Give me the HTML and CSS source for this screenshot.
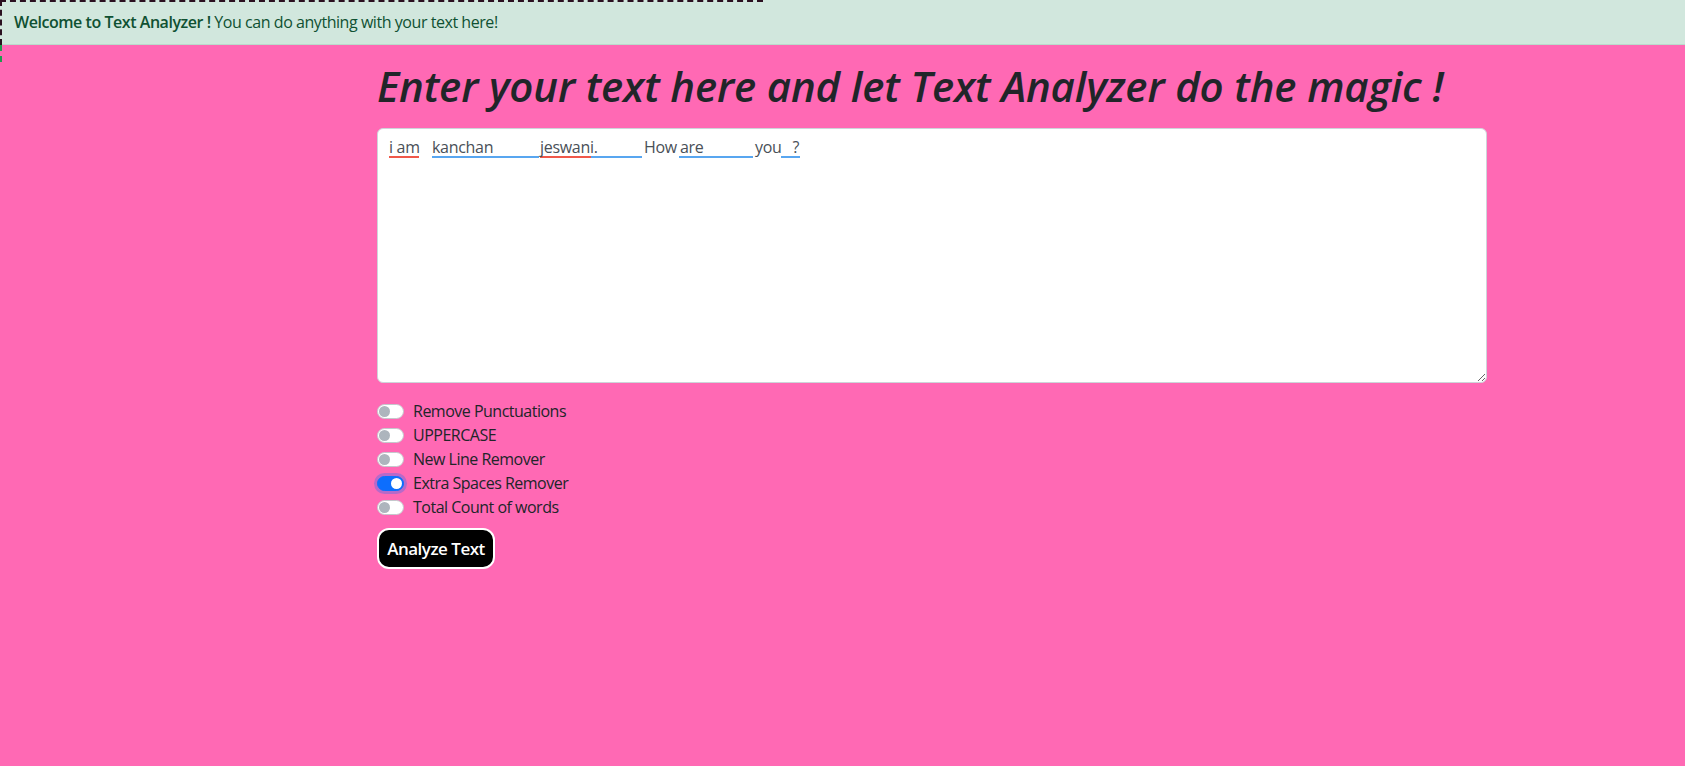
FILE: index.html
```html
<!DOCTYPE html>
<html lang="en">
<head>
<meta charset="utf-8">
<title>Text Analyzer</title>
<link rel="stylesheet" href="styles.css">
</head>
<body>
<div class="alert"><strong>Welcome to Text Analyzer !</strong> You can do anything with your text here!</div>
<div class="dash-box"></div>
<div class="dash-green"></div>
<main class="container">
  <h1 class="title">Enter your text here and let Text Analyzer do the magic !</h1>
  <div class="textbox">
    <div class="line">
      <span class="seg red w1">i am</span>
      <span class="seg blue w2">kanchan</span>
      <span class="seg red w3">jeswani.</span>
      <span class="seg blue w4"></span>
      <span class="seg w5">How</span>
      <span class="seg blue w6">are</span>
      <span class="seg w7">you</span>
      <span class="seg blue w8">?</span>
    </div>
  </div>
  <div class="switches">
    <label class="switch-row"><span class="switch"></span><span>Remove Punctuations</span></label>
    <label class="switch-row"><span class="switch"></span><span>UPPERCASE</span></label>
    <label class="switch-row"><span class="switch"></span><span>New Line Remover</span></label>
    <label class="switch-row"><span class="switch on"></span><span>Extra Spaces Remover</span></label>
    <label class="switch-row"><span class="switch"></span><span>Total Count of words</span></label>
  </div>
  <button class="analyze">Analyze Text</button>
</main>
</body>
</html>
```
FILE: styles.css
```css
* { box-sizing: border-box; }
body {
  margin: 0;
  background: #ff69b4;
  font-family: "Open Sans", "Noto Sans", sans-serif;
  font-size: 16px;
  line-height: 24px;
  color: #212529;
  position: relative;
  min-height: 766px;
}
.alert {
  background: #d1e7dd;
  color: #0f5132;
  border-bottom: 1px solid #badbcc;
  padding: 10px 14px;
  height: 45px;
  letter-spacing: -0.45px;
}
.alert strong { font-weight: 600; }
.dash-box {
  position: absolute;
  left: 0;
  top: 0;
  width: 763px;
  height: 45px;
  border-top: 2px dashed #2a1020;
  border-left: 2px dashed #2a1020;
}
.dash-green {
  position: absolute;
  left: 0;
  top: 45px;
  height: 17px;
  border-left: 2px dashed #1f9a4f;
}
.container {
  margin-left: 377px;
  width: 1110px;
  display: flex;
  flex-direction: column;
  align-items: flex-start;
}
.title {
  margin: 17px 0 18px 0;
  font-size: 42px;
  line-height: 48px;
  font-style: italic;
  font-weight: 600;
  letter-spacing: -0.15px;
  color: #212529;
}
.textbox {
  width: 1110px;
  height: 255px;
  background: #fff;
  border: 1px solid #ced4da;
  border-radius: 6px;
  padding: 10px 12px 6px 11px;
  resize: vertical;
  overflow: auto;
  color: #495057;
}
.line {
  display: flex;
  align-items: flex-start;
  white-space: nowrap;
}
.seg {
  display: block;
  line-height: 17px;
  height: 19px;
  border-bottom: 2px solid transparent;
  letter-spacing: -0.3px;
}
.seg.red { border-bottom-color: #f0584a; }
.seg.blue { border-bottom-color: #58a6f0; }
.w1 { width: 30px; margin-right: 13px; }
.w2 { width: 107px; margin-right: 1px; }
.w3 { width: 51px; }
.w4 { width: 51px; margin-right: 2px; }
.w5 { width: 35px; }
.w6 { width: 74px; margin-right: 2px; padding-left: 1px; }
.w7 { width: 26px; }
.w8 { width: 19px; text-align: right; padding-right: 1px; }
.switches {
  margin-top: 16px;
  display: flex;
  flex-direction: column;
}
.switch-row {
  display: flex;
  align-items: center;
  height: 24px;
  letter-spacing: -0.5px;
}
.switch {
  width: 27px;
  height: 15px;
  border-radius: 8px;
  background: #fff;
  border: 1px solid #c4c8cc;
  margin-right: 9px;
  position: relative;
  flex: none;
}
.switch::after {
  content: "";
  position: absolute;
  left: 1px;
  top: 1px;
  width: 11px;
  height: 11px;
  border-radius: 50%;
  background: #adb5bd;
}
.switch.on {
  background: #0d6efd;
  border-color: #0d6efd;
  box-shadow: 0 0 0 3px rgba(13, 110, 253, 0.3);
}
.switch.on::after {
  left: auto;
  right: 1px;
  background: #fff;
}
.analyze {
  margin-top: 9px;
  width: 118px;
  height: 41px;
  background: #000;
  color: #fff;
  border: 2px solid #fff;
  border-radius: 12px;
  font-family: "Open Sans", "Noto Sans", sans-serif;
  font-size: 17px;
  font-weight: 600;
  letter-spacing: -0.5px;
  padding: 0;
}
```
